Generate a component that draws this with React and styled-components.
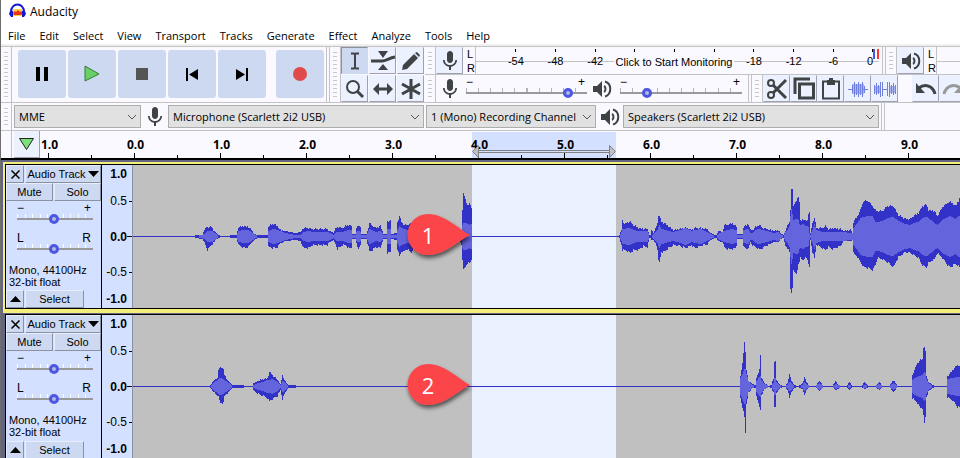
import styled, { createGlobalStyle, css } from 'styled-components'
import { MdMic } from 'react-icons/md'

const GlobalStyle = createGlobalStyle`
  * {
    box-sizing: border-box;
  }

  body {
    margin: 0;
    overflow: hidden;
    background: #646484;
    color: #000;
    font-family: 'Open Sans', 'Noto Sans', sans-serif;
    font-size: 11px;
  }

  button, select, input {
    font: inherit;
    color: inherit;
    margin: 0;
    padding: 0;
  }
`

const Window = styled.div`
  display: flex;
  flex-direction: column;
  min-height: 100vh;
  border-left: 1px solid #6e6e6e;
`

const TitleBar = styled.header`
  display: flex;
  align-items: center;
  gap: 4px;
  height: 22px;
  padding-left: 8px;
  background: #fff;
`

const Title = styled.h1`
  margin: 0;
  font-size: 12px;
  font-weight: 400;
`

const MenuBar = styled.nav`
  display: flex;
  align-items: center;
  gap: 14px;
  height: 24px;
  padding: 6px 7px 0;
  background: #fff;
  border-bottom: 2px solid #f0f0f0;
`

const MenuItem = styled.button`
  border: 0;
  background: none;
  line-height: 16px;
`

const ToolDock = styled.div`
  display: flex;
  height: 57px;
  background: #f9f9ff;
  border-top: 1px solid #c3c3c3;
  border-bottom: 1px solid #c3c3c3;
`

const Grip = styled.div`
  flex: none;
  width: 11px;
  padding: 5px 3px;
  border-right: 1px solid #c3c3c3;

  &::before {
    content: '';
    display: block;
    height: 100%;
    background: repeating-linear-gradient(#c8c8c8 0 1px, transparent 1px 4px);
  }
`

const Divider = styled.div`
  flex: none;
  width: 4px;
  border: solid #c3c3c3;
  border-width: 0 1px;
`

const Transport = styled.div`
  display: flex;
  gap: 2px;
  padding: 3px 2px 0 6px;
`

const TransportButton = styled.button`
  display: grid;
  place-items: center;
  width: 48px;
  height: 48px;
  margin-left: ${(p) => (p.$apart ? '8px' : 0)};
  border: 0;
  border-radius: 3px;
  background: #cdd9f0;
`

const ToolGrid = styled.div`
  display: grid;
  grid-template-columns: repeat(3, 27px);
  gap: 1px;
  padding-right: 1px;
`

const ToolButton = styled.button`
  display: grid;
  flex: none;
  place-items: center;
  width: 27px;
  height: 27px;
  border: solid;
  border-width: 1px;
  ${(p) =>
    p.$active
      ? css`
          background: #cdd9f0;
          border-color: #8a91a3 #cdd9f0 #cdd9f0 #8a91a3;
        `
      : css`
          background: #ebf1ff;
          border-color: #ebf1ff #a0a0b0 #a0a0b0 #ebf1ff;
        `}
`

const DockRows = styled.div`
  flex: 1;
  min-width: 0;
`

const DockRow = styled.div`
  display: flex;
  height: 28px;
  overflow: hidden;
  border-bottom: ${(p) => (p.$last ? 0 : '1px solid #c3c3c3')};
`

const Channels = styled.div`
  display: flex;
  flex: none;
  flex-direction: column;
  justify-content: center;
  width: 12px;
  padding-left: 4px;
  font: 11px/14px 'Liberation Sans', Arial, sans-serif;
`

const Meter = styled.div`
  position: relative;
  display: flex;
  flex: none;
  width: ${(p) => p.$width};
  padding: 0 6px 0 20px;
  border-left: 1px solid #c3c3c3;
  background: linear-gradient(#c3c3c3, #c3c3c3) 0 14px / 100% 1px no-repeat;
  font: 11px/14px 'Liberation Sans', Arial, sans-serif;
`

const MeterMark = styled.span`
  display: flex;
  flex: 2 0 0;
  flex-direction: column;
  align-items: center;

  &::before {
    content: '';
    width: 1px;
    height: 3px;
    margin: 2px 0;
    background: #000;
  }

  &:last-of-type {
    flex-grow: 1;
    align-items: flex-end;
  }
`

const MeterHint = styled.button`
  position: absolute;
  top: 5px;
  left: 138px;
  width: 120px;
  height: 19px;
  border: 0;
  background: #f9f9ff;
  white-space: nowrap;
`

const Peak = styled.i`
  position: absolute;
  top: 2px;
  right: ${(p) => p.$right};
  width: 2px;
  height: 10px;
  background: ${(p) => p.$color};
`

const IconBox = styled.span`
  display: grid;
  flex: none;
  place-items: center;
  width: ${(p) => p.$width || '27px'};
`

const SliderBox = styled.label`
  display: flex;
  flex: none;
  flex-direction: column;
  width: ${(p) => p.$width};
  margin: ${(p) => p.$margin || 0};
`

const SliderEnds = styled.span`
  display: flex;
  justify-content: space-between;
  height: 8px;
  padding-right: 2px;
  font: 12px/8px 'Liberation Sans', Arial, sans-serif;
`

const Range = styled.input`
  display: block;
  width: 100%;
  height: 12px;
  appearance: none;
  background:
    linear-gradient(#999, #999) 0 6px / 100% 2px no-repeat,
    repeating-linear-gradient(90deg, ${(p) => p.$tick} 0 1px, transparent 1px 10%) 0 2px / 100% 4px no-repeat;

  &::-webkit-slider-thumb {
    appearance: none;
    width: 10px;
    height: 10px;
    margin-top: 2px;
    border: 3px solid #4b55e6;
    border-radius: 50%;
    background: #b4bbd8;
  }
`

const DeviceBar = styled.div`
  display: flex;
  height: 28px;
  background: #f9f9ff;
  border-bottom: 1px solid #c3c3c3;
`

const DeviceFields = styled.div`
  display: flex;
  align-items: center;
  padding: 0 2px;
`

const SelectWrap = styled.div`
  position: relative;
  width: ${(p) => p.$width};
  margin-right: ${(p) => p.$gap || 0};
`

const Select = styled.select`
  display: block;
  width: 100%;
  height: 23px;
  padding: 0 19px 0 4px;
  appearance: none;
  border: 1px solid #adadad;
  border-radius: 0;
  background: #e1e1e1;
`

const SelectArrow = styled.svg`
  position: absolute;
  top: 9px;
  right: 4px;
  pointer-events: none;
`

const Timeline = styled.div`
  position: relative;
  display: flex;
  height: 29px;
  overflow: hidden;
  background: #f9f9ff;
  border-bottom: 2px solid #000;
`

const TimelineEdge = styled.div`
  flex: none;
  width: 11px;
  margin-right: 2px;
  border-right: 1px solid #c3c3c3;
`

const PlayheadButton = styled.button`
  display: grid;
  flex: none;
  place-items: center;
  width: 26px;
  height: 27px;
  border: solid #a0a0b0;
  border-width: 0 1px 1px 0;
  background: #ebf1ff;
`

const Seconds = styled.div`
  position: relative;
  display: flex;
  margin-left: -35px;
`

const Second = styled.span`
  flex: none;
  width: 86px;
  padding: 6px 0 0 3px;
  text-align: center;
  font-size: 12px;
  font-weight: 700;
  line-height: 16px;
  background:
    linear-gradient(#000, #000) 43px 100% / 1px 5px no-repeat,
    linear-gradient(#000, #000) 0 100% / 1px 3px no-repeat;
`

const SecondsClip = styled.div`
  display: flex;
  flex: 1;
  min-width: 0;
  overflow: hidden;
`

const TimeSelection = styled.div`
  position: absolute;
  top: 1px;
  bottom: 0;
  left: 471px;
  width: 144px;
  background: #d4e0ff;
`

const SelectionArrow = styled.svg`
  position: absolute;
  bottom: 0;
  left: 471px;
`

const Track = styled.section`
  display: flex;
  height: ${(p) => (p.$focused ? '154px' : '145px')};
  padding-left: 2px;
  border: solid;
  border-width: ${(p) => (p.$focused ? '2px 0 1px' : 0)};
  border-color: #646484;
  background: #646484;
`

const TrackFrame = styled.div`
  display: flex;
  flex: 1;
  min-width: 0;
  border: solid ${(p) => (p.$focused ? '#f4ee7a' : '#646484')};
  border-width: ${(p) => (p.$focused ? '2px 0 4px 2px' : '0 0 0 2px')};
`

const TrackBody = styled.div`
  display: flex;
  flex: 1;
  min-width: 0;
  border: solid #000;
  border-width: 1px 0 ${(p) => (p.$focused ? '1px' : 0)} 1px;
`

const Panel = styled.div`
  display: flex;
  flex: none;
  flex-direction: column;
  width: 96px;
  border-right: 1px solid #000;
  background: #d4e0ff;
  font: 11px/12px 'Liberation Sans', Arial, sans-serif;
`

const PanelRow = styled.div`
  display: flex;
  gap: 1px;
  height: 18px;
`

const PanelButton = styled.button`
  display: flex;
  flex: ${(p) => (p.$width ? 'none' : 1)};
  align-items: center;
  justify-content: center;
  gap: 2px;
  width: ${(p) => p.$width || 'auto'};
  height: 18px;
  border: solid;
  border-width: 1px;
  border-color: #e6eeff #8a91a3 #8a91a3 #e6eeff;
  background: #cdd9f0;
  white-space: nowrap;
`

const PanelInfo = styled.p`
  flex: 1;
  margin: 10px 0 0;
  padding-left: 3px;
`

const Scale = styled.div`
  display: grid;
  flex: none;
  grid-template-rows: 18px 36px 35px 36px 18px;
  align-items: center;
  width: 31px;
  padding-right: 5px;
  border-right: 1px solid #8a91a3;
  background:
    linear-gradient(#000, #000) 100% 36px / 3px 1px no-repeat,
    linear-gradient(#000, #000) 100% 71px / 5px 1px no-repeat,
    linear-gradient(#000, #000) 100% 107px / 3px 1px no-repeat,
    #d4e0ff;
  text-align: right;
  font: 12px/14px 'Liberation Sans', Arial, sans-serif;
`

const ScaleMark = styled.span`
  font-weight: ${(p) => (p.$strong ? 700 : 400)};
`

const WaveArea = styled.div`
  position: relative;
  flex: 1;
  overflow: hidden;
  background: #c0c0c0;

  > svg {
    display: block;
  }
`

const PinBox = styled.div`
  position: absolute;
  top: 49px;
  left: 272px;
  width: 70px;
  height: 50px;
`

const PinNumber = styled.span`
  position: absolute;
  top: 0;
  left: 2px;
  width: 42px;
  text-align: center;
  font: 22px/42px 'Open Sans', sans-serif;
  color: #fff;
`

// [x, peak above the line, peak below the line, rms]
const voiceTrack = [
  [0, 0, 0, 0], [61, 0, 0, 0], [62, 1, 1, 0], [69, 1, 2, 1], [71, 6, 5, 2], [73, 9, 11, 4], [74, 9, 13, 5], [78, 9, 8, 5], [80, 6, 6, 4],
  [83, 3, 2, 2], [85, 1, 1, 0], [88, 0, 0, 0], [96, 0, 0, 0], [97, 1, 1, 0], [103, 1, 1, 0], [105, 9, 8, 5], [110, 10, 11, 6], [115, 9, 10, 6],
  [118, 6, 6, 4], [121, 2, 3, 2], [124, 1, 1, 0], [134, 1, 1, 0], [135, 10, 10, 5], [140, 12, 11, 7], [144, 10, 10, 6], [147, 6, 6, 5],
  [152, 5, 4, 3], [162, 3, 3, 1], [167, 4, 4, 1], [170, 8, 11, 4], [175, 8, 11, 5], [179, 7, 8, 4], [185, 7, 8, 4], [194, 7, 8, 4],
  [196, 5, 5, 3], [200, 3, 3, 1], [202, 7, 7, 3], [204, 9, 12, 4], [209, 8, 8, 4], [212, 10, 8, 5], [215, 11, 11, 6], [218, 10, 11, 6],
  [219, 2, 2, 1], [222, 2, 2, 1], [223, 8, 6, 4], [225, 11, 13, 5], [227, 8, 8, 4], [228, 2, 2, 1], [233, 2, 2, 1], [234, 5, 6, 3],
  [236, 13, 14, 7], [239, 10, 13, 6], [242, 8, 10, 4], [247, 10, 11, 5], [249, 5, 5, 3], [250, 2, 2, 1], [253, 2, 2, 1], [254, 15, 16, 7],
  [257, 15, 15, 7], [258, 2, 2, 1], [263, 3, 3, 1], [264, 14, 12, 6], [266, 20, 19, 10], [268, 14, 15, 8], [271, 11, 14, 7], [274, 11, 12, 6],
  [278, 13, 16, 7], [282, 6, 6, 3], [326, 2, 2, 1], [328, 4, 8, 2], [329, 26, 22, 11], [330, 44, 33, 13], [332, 36, 30, 13], [334, 31, 26, 12],
  [336, 33, 26, 11], [338, 28, 23, 12], [339, 0, 0, 0], [485, 0, 0, 0], [486, 1, 1, 0], [488, 6, 8, 4], [489, 16, 13, 7], [491, 12, 13, 7], [494, 14, 14, 8],
  [497, 14, 16, 8], [500, 11, 13, 6], [505, 8, 13, 5], [510, 7, 9, 5], [514, 7, 10, 5], [516, 1, 1, 0], [517, 1, 1, 0], [518, 6, 3, 0],
  [520, 3, 3, 2], [522, 7, 6, 4], [524, 13, 12, 6], [525, 21, 24, 9], [526, 20, 25, 11], [528, 14, 15, 7], [532, 12, 14, 6], [535, 10, 11, 5],
  [540, 6, 8, 4], [547, 7, 9, 6], [552, 8, 11, 8], [558, 6, 8, 5], [562, 8, 11, 6], [567, 8, 9, 7], [574, 7, 7, 4], [577, 3, 3, 2],
  [581, 1, 1, 0], [583, 1, 1, 0], [585, 5, 4, 2], [589, 4, 5, 4], [591, 11, 10, 5], [594, 11, 12, 6], [599, 13, 12, 7], [602, 10, 11, 6],
  [603, 9, 9, 6], [604, 2, 2, 1], [609, 2, 2, 1], [610, 9, 10, 6], [615, 12, 12, 7], [617, 6, 5, 3], [619, 6, 8, 3], [622, 9, 10, 6],
  [626, 11, 12, 7], [629, 8, 11, 6], [634, 7, 8, 5], [640, 5, 5, 3], [645, 6, 5, 4], [647, 3, 2, 2], [650, 1, 1, 0], [652, 5, 9, 4],
  [654, 11, 11, 6], [656, 14, 15, 10], [657, 25, 52, 20], [658, 47, 56, 27], [659, 47, 50, 22], [660, 31, 34, 16], [663, 35, 37, 17], [665, 40, 28, 16],
  [666, 34, 25, 12], [667, 15, 20, 11], [670, 17, 24, 12], [672, 15, 20, 10], [674, 16, 22, 10], [675, 23, 28, 9], [676, 24, 30, 3], [677, 3, 3, 1],
  [679, 13, 15, 6], [681, 18, 21, 12], [683, 8, 8, 6], [689, 8, 11, 4], [692, 10, 13, 4], [695, 7, 10, 4], [699, 8, 12, 4], [707, 7, 9, 4],
  [710, 5, 4, 4], [717, 6, 4, 3], [719, 3, 3, 3], [720, 14, 16, 8], [724, 20, 20, 13], [727, 26, 25, 18], [730, 35, 30, 19], [735, 35, 31, 20],
  [739, 30, 33, 20], [742, 26, 28, 14], [744, 25, 21, 14], [749, 25, 22, 15], [754, 30, 25, 18], [760, 30, 30, 19], [765, 21, 20, 15],
  [772, 17, 15, 12], [777, 17, 16, 11], [780, 20, 18, 13], [785, 23, 21, 14], [789, 30, 28, 18], [793, 31, 31, 19], [795, 26, 26, 18],
  [801, 25, 22, 13], [804, 20, 16, 11], [809, 29, 21, 16], [814, 33, 28, 19], [817, 34, 30, 20], [822, 30, 27, 17], [825, 35, 29, 20], [827, 40, 31, 20],
]

const clickTrack = [
  [0, 0, 0, 0], [76, 0, 0, 0], [77, 1, 1, 0], [80, 5, 5, 3], [84, 8, 8, 6], [85, 17, 10, 7], [87, 18, 16, 8], [90, 18, 16, 7], [91, 11, 9, 6],
  [94, 6, 6, 4], [98, 2, 2, 1], [99, 1, 1, 0], [110, 1, 1, 0], [111, 0, 0, 0], [119, 0, 0, 0], [120, 3, 3, 1], [125, 5, 7, 3], [130, 7, 9, 4],
  [134, 8, 11, 6], [136, 14, 14, 6], [139, 11, 12, 7], [144, 6, 9, 4], [147, 2, 3, 1], [149, 11, 12, 5], [151, 6, 7, 4], [154, 2, 2, 1],
  [155, 1, 1, 0], [162, 1, 1, 0], [163, 0, 0, 0], [606, 0, 0, 0], [607, 9, 11, 8], [609, 23, 20, 12], [611, 44, 30, 17], [612, 33, 46, 17], [613, 16, 17, 12],
  [615, 5, 6, 5], [619, 2, 1, 1], [622, 1, 1, 0], [623, 8, 9, 5], [626, 17, 20, 9], [627, 30, 23, 10], [628, 8, 8, 6], [631, 3, 2, 2],
  [635, 0, 0, 0], [638, 1, 1, 0], [640, 8, 6, 3], [641, 24, 20, 8], [642, 24, 20, 8], [643, 6, 6, 4], [646, 2, 2, 1], [649, 0, 0, 0],
  [652, 0, 0, 0], [654, 3, 3, 1], [656, 12, 11, 4], [658, 5, 5, 3], [661, 1, 1, 0], [664, 0, 0, 0], [667, 1, 1, 0], [669, 3, 2, 1],
  [671, 9, 8, 4], [673, 4, 3, 2], [676, 0, 0, 0], [682, 0, 0, 0], [686, 5, 4, 3], [690, 0, 0, 0], [699, 0, 0, 0], [702, 5, 3, 2], [705, 1, 2, 1],
  [707, 0, 0, 0], [713, 0, 0, 0], [716, 4, 3, 1], [719, 0, 0, 0], [728, 0, 0, 0], [731, 4, 2, 1], [735, 0, 0, 0], [742, 0, 0, 0], [746, 4, 3, 2],
  [749, 0, 0, 0], [756, 0, 0, 0], [760, 6, 5, 3], [764, 0, 0, 0], [778, 0, 0, 0], [779, 11, 11, 6], [783, 21, 15, 9], [787, 26, 21, 10], [789, 27, 21, 11],
  [790, 39, 29, 13], [791, 39, 36, 14], [792, 34, 30, 13], [793, 10, 10, 7], [795, 4, 4, 3], [799, 1, 1, 0], [801, 0, 0, 0], [813, 0, 0, 0],
  [814, 10, 10, 7], [819, 16, 13, 8], [824, 21, 20, 9], [827, 20, 20, 9],
]

// one column per pixel, with the small unevenness of sampled audio
const columns = (points) => {
  let peaks = ''
  let rms = ''
  for (let i = 0; i < points.length - 1; i++) {
    const [x0, ...from] = points[i]
    const [x1, ...to] = points[i + 1]
    for (let x = x0; x < x1; x++) {
      const t = (x - x0) / (x1 - x0)
      const [up, down, mid] = from.map((v, k) => {
        const value = v + (to[k] - v) * t
        const wobble = value > 5 && k < 2 ? ((x * (7 + k * 4)) % 5) - 2 : 0
        return Math.round(value + wobble * 0.4)
      })
      peaks += `M${x} ${71 - up}h1v${up + down + 1}h-1z`
      if (mid > 0) rms += `M${x} ${71 - mid}h1v${mid * 2 + 1}h-1z`
    }
  }
  return { peaks, rms }
}

const Icon = ({ size = 20, children }) => (
  <svg
    width={size}
    height={size}
    viewBox="0 0 20 20"
    overflow="visible"
    fill="none"
    stroke="#3f4345"
    strokeWidth="2"
  >
    {children}
  </svg>
)

const SpeakerIcon = () => (
  <Icon>
    <path d="M1 7h4l5-5v16l-5-5H1z" fill="#3f4345" stroke="none" />
    <path d="M12 7c2 1 2 5 0 6" />
    <path d="M13 2.500c7 2 7 13 0 15" />
  </Icon>
)

const tools = [
  {
    name: 'Selection',
    icon: <path d="M6 2.500h3l1 1 1-1h3M10 3v14M6 17.500h3l1-1 1 1h3" strokeWidth="2" />,
  },
  {
    name: 'Envelope',
    icon: (
      <>
        <path d="M5 0h10l-5 7zM5 19h10l-5-6z" fill="#3f4345" stroke="none" />
        <path d="M-2 10h11c4 0 7-3 13-4" strokeWidth="3" />
      </>
    ),
  },
  {
    name: 'Draw',
    icon: <path d="M1 19l1-5L13 3l4 4L6 18zM14 2l2-1 3 3-1 2z" fill="#3f4345" stroke="none" />,
  },
  {
    name: 'Zoom',
    icon: (
      <>
        <circle cx="8" cy="8" r="6" />
        <path d="M12 12l6 6" strokeWidth="3" />
      </>
    ),
  },
  {
    name: 'Time shift',
    icon: <path d="M0 10l6-6v4.500h8V4l6 6-6 6v-4.500H6V16z" fill="#3f4345" stroke="none" />,
  },
  {
    name: 'Multi',
    icon: <path d="M10 0v20M1 5l18 10M1 15l18-10" strokeWidth="3" />,
  },
]

const edits = [
  {
    name: 'Cut',
    icon: (
      <>
        <circle cx="4" cy="4" r="3" />
        <circle cx="4" cy="16" r="3" />
        <path d="M6 6l13 13M6 14L19 1" strokeWidth="3" />
      </>
    ),
  },
  {
    name: 'Copy',
    icon: <path d="M5.500 5h14v14h-14zM1 15V0h15" strokeWidth="3" />,
  },
  {
    name: 'Paste',
    icon: (
      <>
        <path d="M2 2.500h16v17H2z" />
        <path d="M6 1h2v-2h4v2h2v5H6z" fill="#3f4345" stroke="none" />
      </>
    ),
  },
  {
    name: 'Trim',
    icon: (
      <>
        <path d="M4 5h12v10H4z" fill="#a9b6f2" stroke="none" />
        <path d="M0 10.500h5M15 10.500h5M4.500 6v8M6.500 3v15M8.500 5v11M10.500 3v15M12.500 5v11M14.500 3v15M16.500 7v7" stroke="#7080de" strokeWidth="1" />
      </>
    ),
  },
  {
    name: 'Silence',
    icon: (
      <>
        <path d="M0 7h6v7H0zM14 7h6v7h-6z" fill="#a9b6f2" stroke="none" />
        <path d="M-.5 6v9M1.500 4v12M3.500 6v9M5.500 3v15M7.500 3v14M7 10.500h6M12.500 3v14M14.500 3v15M16.500 6v9M18.500 4v12M20.500 6v9" stroke="#7080de" strokeWidth="1" />
      </>
    ),
  },
]

const levels = ['-54', '-48', '-42', '', '', '', '-18', '-12', '-6', '0']

const menus = ['File', 'Edit', 'Select', 'View', 'Transport', 'Tracks', 'Generate', 'Effect', 'Analyze', 'Tools', 'Help']

const Slider = ({ label, ends = ['−', '+'], value, width, margin, tick = '#b4b4b4' }) => (
  <SliderBox $width={width} $margin={margin}>
    <SliderEnds>
      <span>{ends[0]}</span>
      <span>{ends[1]}</span>
    </SliderEnds>
    <Range type="range" aria-label={label} defaultValue={value} $tick={tick} />
  </SliderBox>
)

const Combo = ({ label, value, width, gap }) => (
  <SelectWrap $width={width} $gap={gap}>
    <Select aria-label={label}>
      <option>{value}</option>
    </Select>
    <SelectArrow width="10" height="6" viewBox="0 0 10 6" fill="none" stroke="#555">
      <path d="M1 1l4 4 4-4" />
    </SelectArrow>
  </SelectWrap>
)

const Pin = ({ number }) => (
  <PinBox>
    <svg width="70" height="50" viewBox="0 0 70 50">
      <defs>
        <filter id={`shadow${number}`} x="-20%" y="-20%" width="140%" height="150%">
          <feDropShadow dx="1" dy="3" stdDeviation="2" floodColor="#000" floodOpacity="0.6" />
        </filter>
      </defs>
      <path
        d="M65 21C56 17 40 0 23 0a20.500 20.500 0 0 0 0 41C40 41 56 25 65 21z"
        fill="#fc4449"
        filter={`url(#shadow${number})`}
      />
    </svg>
    <PinNumber>{number}</PinNumber>
  </PinBox>
)

const AudioTrack = ({ focused, points, pin }) => {
  const wave = columns(points)

  return (
    <Track $focused={focused}>
      <TrackFrame $focused={focused}>
        <TrackBody $focused={focused}>
          <Panel>
            <PanelRow>
              <PanelButton $width="18px" aria-label="Close track">
                <svg width="9" height="9" viewBox="0 0 9 9" stroke="#000" strokeWidth="1.5">
                  <path d="M.5.500l8 8M8.500.500l-8 8" />
                </svg>
              </PanelButton>
              <PanelButton>
                Audio Track
                <svg width="11" height="6" viewBox="0 0 11 6">
                  <path d="M0 0h11L5.500 6z" />
                </svg>
              </PanelButton>
            </PanelRow>
            <PanelRow>
              <PanelButton>Mute</PanelButton>
              <PanelButton>Solo</PanelButton>
            </PanelRow>
            <Slider label="Gain" value={48} width="76px" margin="3px 0 0 11px" tick="#fff" />
            <Slider label="Pan" ends={['L', 'R']} value={48} width="76px" margin="10px 0 0 11px" tick="#fff" />
            <PanelInfo>
              Mono, 44100Hz
              <br />
              32-bit float
            </PanelInfo>
            <PanelRow>
              <PanelButton $width="18px" aria-label="Collapse track">
                <svg width="11" height="6" viewBox="0 0 11 6">
                  <path d="M0 6h11L5.500 0z" />
                </svg>
              </PanelButton>
              <PanelButton $width="59px">Select</PanelButton>
            </PanelRow>
          </Panel>
          <Scale>
            <ScaleMark $strong>1.0</ScaleMark>
            <ScaleMark>0.5</ScaleMark>
            <ScaleMark $strong>0.0</ScaleMark>
            <ScaleMark>-0.5</ScaleMark>
            <ScaleMark $strong>-1.0</ScaleMark>
          </Scale>
          <WaveArea>
            <svg width="100%" height="144" shapeRendering="crispEdges">
              <rect x="339" width="144" height="144" fill="#e9f0ff" />
              <rect y="71" width="100%" height="1" fill="#3232c8" />
              <path d={wave.peaks} fill="#3232c8" />
              <path d={wave.rms} fill="#6464dc" />
            </svg>
            <Pin number={pin} />
          </WaveArea>
        </TrackBody>
      </TrackFrame>
    </Track>
  )
}

const App = () => (
  <>
    <GlobalStyle />
    <Window>
      <TitleBar>
        <svg width="17" height="16" viewBox="0 0 17 16">
          <path d="M4 6h9v7H4z" fill="#ffd43a" />
          <path d="M4 10l2-2 1 1 2-2 2 2 1-1 2 2-2 2H5z" fill="#e8321c" />
          <path d="M2 9C2-1 15-1 15 9" fill="none" stroke="#1418d2" strokeWidth="2" />
          <path d="M1 8h3v6H2L0 11zM16 8h-3v6h2l2-3z" fill="#1418d2" />
        </svg>
        <Title>Audacity</Title>
      </TitleBar>
      <MenuBar>
        {menus.map((menu) => (
          <MenuItem key={menu}>{menu}</MenuItem>
        ))}
      </MenuBar>

      <ToolDock>
        <Grip />
        <Transport>
          <TransportButton aria-label="Pause">
            <svg width="14" height="14"><path d="M1 0h4v14H1zM9 0h4v14H9z" /></svg>
          </TransportButton>
          <TransportButton aria-label="Play">
            <svg width="16" height="18"><path d="M1 1v15l14-7z" fill="#67d067" stroke="#3a7a3a" /></svg>
          </TransportButton>
          <TransportButton aria-label="Stop">
            <svg width="12" height="12"><path d="M0 0h12v12H0z" fill="#555" /></svg>
          </TransportButton>
          <TransportButton aria-label="Skip to start">
            <svg width="14" height="13"><path d="M1 0h2v13H1zM13 1v11L4 6.500z" /></svg>
          </TransportButton>
          <TransportButton aria-label="Skip to end">
            <svg width="14" height="13"><path d="M11 0h2v13h-2zM1 1v11l9-5.500z" /></svg>
          </TransportButton>
          <TransportButton $apart aria-label="Record">
            <svg width="14" height="14"><circle cx="7" cy="7" r="7" fill="#e14a4a" /></svg>
          </TransportButton>
        </Transport>
        <Divider />
        <Grip />
        <ToolGrid>
          {tools.map((tool, i) => (
            <ToolButton key={tool.name} $active={i === 0} aria-label={tool.name}>
              <Icon>{tool.icon}</Icon>
            </ToolButton>
          ))}
        </ToolGrid>

        <DockRows>
          <DockRow>
            <Grip />
            <ToolButton aria-label="Record meter">
              <MdMic size={24} color="#3f4345" />
            </ToolButton>
            <Channels>
              <span>L</span>
              <span>R</span>
            </Channels>
            <Meter $width="404px">
              {levels.map((level, i) => (
                <MeterMark key={i}>{level}</MeterMark>
              ))}
              <MeterHint>Click to Start Monitoring</MeterHint>
              <Peak $right="4px" $color="#4b55e6" />
              <Peak $right="0" $color="#f33" />
            </Meter>
            <IconBox $width="3px" />
            <Divider />
            <Grip />
            <ToolButton aria-label="Playback meter">
              <SpeakerIcon />
            </ToolButton>
            <Channels>
              <span>L</span>
              <span>R</span>
            </Channels>
            <Meter $width="404px" />
          </DockRow>
          <DockRow $last>
            <Grip />
            <IconBox>
              <MdMic size={24} color="#3f4345" />
            </IconBox>
            <Slider label="Recording volume" value={87} width="121px" margin="3px 5px 0 3px" />
            <IconBox $width="20px">
              <SpeakerIcon />
            </IconBox>
            <Slider label="Playback volume" value={20} width="122px" margin="3px 6px 0 8px" />
            <Divider />
            <Grip />
            {edits.map((edit) => (
              <ToolButton key={edit.name} aria-label={edit.name}>
                <Icon>{edit.icon}</Icon>
              </ToolButton>
            ))}
            <IconBox $width="14px" />
            <ToolButton aria-label="Undo">
              <Icon>
                <path d="M3 9c6-5 14-2 16 6" strokeWidth="3" />
                <path d="M0 4v10h9z" fill="#3f4345" stroke="none" />
              </Icon>
            </ToolButton>
            <ToolButton aria-label="Redo">
              <Icon>
                <path d="M17 9C11 4 3 7 1 15" stroke="#999" strokeWidth="3" />
                <path d="M20 4v10h-9z" fill="#999" stroke="none" />
              </Icon>
            </ToolButton>
          </DockRow>
        </DockRows>
      </ToolDock>

      <DeviceBar>
        <Grip />
        <DeviceFields>
          <Combo label="Audio host" value="MME" width="127px" />
          <IconBox>
            <MdMic size={24} color="#3f4345" />
          </IconBox>
          <Combo label="Recording device" value="Microphone (Scarlett 2i2 USB)" width="256px" gap="2px" />
          <Combo label="Recording channels" value="1 (Mono) Recording Channel" width="170px" />
          <IconBox>
            <SpeakerIcon />
          </IconBox>
          <Combo label="Playback device" value="Speakers (Scarlett 2i2 USB)" width="256px" />
        </DeviceFields>
        <Divider />
      </DeviceBar>

      <Timeline>
        <TimelineEdge />
        <PlayheadButton aria-label="Playhead">
          <svg width="17" height="14"><path d="M1.500 1.500h14l-7 11z" fill="#7be07b" stroke="#222" /></svg>
        </PlayheadButton>
        <TimeSelection />
        <SecondsClip>
          <Seconds>
            {['1.0', '0.0', '1.0', '2.0', '3.0', '4.0', '5.0', '6.0', '7.0', '8.0', '9.0'].map((second, i) => (
              <Second key={i}>{second}</Second>
            ))}
          </Seconds>
        </SecondsClip>
        <SelectionArrow width="144" height="13" viewBox="0 0 144 13">
          <path d="M6 5.500h132M6 7.500h132" stroke="#808080" />
          <path d="M.5 6.500l6-6v12zM143.500 6.500l-6-6v12z" fill="#c0c0c0" stroke="#808080" />
        </SelectionArrow>
      </Timeline>

      <AudioTrack focused points={voiceTrack} pin={1} />
      <AudioTrack points={clickTrack} pin={2} />
    </Window>
  </>
)

export default App
